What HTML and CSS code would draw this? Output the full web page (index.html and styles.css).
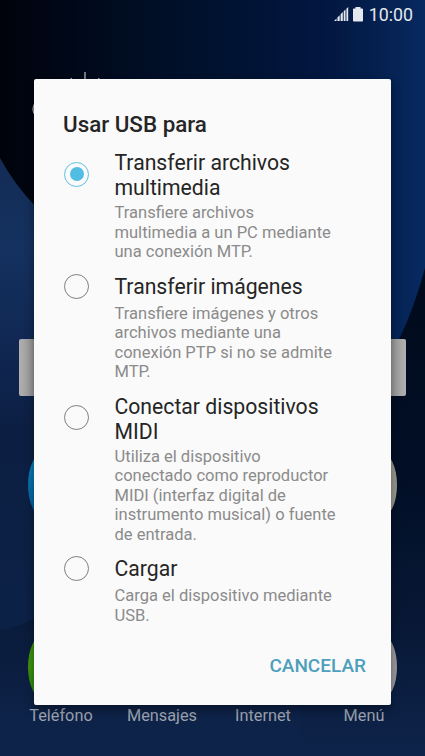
FILE: index.html
```html
<!DOCTYPE html>
<html lang="es">
  <head>
    <meta charset="UTF-8" />
    <meta name="viewport" content="width=device-width, initial-scale=1.0" />
    <title>Usar USB para</title>
    <link rel="stylesheet" href="styles.css">
  </head>
  <body>
    <div class="phone">
      <!-- WALLPAPER -->
      <svg class="wallpaper" viewBox="0 0 425 756" preserveAspectRatio="none">
        <defs>
          <linearGradient id="sky" x1="0" y1="0" x2="1" y2="0">
            <stop offset="0" stop-color="#00030a" />
            <stop offset="0.1" stop-color="#000613" />
            <stop offset="0.45" stop-color="#00112c" />
            <stop offset="0.75" stop-color="#02163f" />
            <stop offset="0.93" stop-color="#052354" />
            <stop offset="1" stop-color="#072a62" />
          </linearGradient>
          <linearGradient id="wave" x1="0" y1="158" x2="0" y2="756" gradientUnits="userSpaceOnUse">
            <stop offset="0" stop-color="#132c55" />
            <stop offset="0.15" stop-color="#14315f" />
            <stop offset="0.32" stop-color="#102752" />
            <stop offset="0.45" stop-color="#0c1f43" />
            <stop offset="0.76" stop-color="#0c2146" />
            <stop offset="1" stop-color="#0e2349" />
          </linearGradient>
          <linearGradient id="shade" x1="0" y1="268" x2="0" y2="756" gradientUnits="userSpaceOnUse">
            <stop offset="0" stop-color="#000a1b" />
            <stop offset="0.45" stop-color="#020f27" />
            <stop offset="0.75" stop-color="#081937" />
            <stop offset="0.9" stop-color="#0c2044" />
            <stop offset="1" stop-color="#0e2349" />
          </linearGradient>
          <linearGradient id="fold" x1="0" y1="617" x2="0" y2="720" gradientUnits="userSpaceOnUse">
            <stop offset="0" stop-color="#0a1b3a" />
            <stop offset="1" stop-color="#0a1b3a" stop-opacity="0" />
          </linearGradient>
        </defs>
        <rect width="425" height="756" fill="url(#sky)" />
        <path d="M0 158Q14 184 36 207Q90 262 200 300H300V756H0Z" fill="url(#wave)" />
        <path d="M0 630Q20 627 36 617H300V756H0Z" fill="url(#fold)" />
        <path d="M425 268Q412 315 396 345L300 440V756H425Z" fill="url(#shade)" />
      </svg>

      <header class="status-bar">
        <svg class="signal" viewBox="0 0 15 15">
          <path d="M0 14L2.5 11.5V14ZM3.4 10.5L5.7 8.2V14H3.4ZM6.6 7.3L8.8 5.1V14H6.6ZM9.7 4.2L11.5 2.4V14H9.7ZM12.4 1.7L14.2 0V14H12.4Z" />
        </svg>
        <svg class="battery" viewBox="0 0 10 15">
          <path d="M2.5 0H7.5V1.5H9.2Q10 1.5 10 2.3V13.7Q10 14.5 9.2 14.5H.8Q0 14.5 0 13.7V2.3Q0 1.5 .8 1.5H2.5Z" />
        </svg>
        <span>10:00</span>
      </header>

      <!-- HOME SCREEN -->
      <main class="home">
        <svg class="weather" viewBox="0 0 80 70">
          <path d="M53 0V10M39 6L42 12M67 6L64 12" />
          <path d="M10 28A9 9 0 0 0 10 46H60A12 12 0 0 0 60 22" />
          <circle cx="53" cy="26" r="12" />
        </svg>
        <div class="search"></div>
        <div class="apps">
          <i class="app blue"></i>
          <i class="app sand"></i>
        </div>
        <div class="dock">
          <div><i class="app green"></i>Teléfono</div>
          <div>Mensajes</div>
          <div>Internet</div>
          <div><i class="app gray"></i>Menú</div>
        </div>
      </main>

      <!-- USB DIALOG -->
      <section class="dialog">
        <h1>Usar USB para</h1>
        <div class="options">
          <div class="option">
            <span class="radio checked"></span>
            <h2>Transferir archivos<br>multimedia</h2>
            <p>Transfiere archivos<br>multimedia a un PC mediante<br>una conexión MTP.</p>
          </div>
          <div class="option">
            <span class="radio"></span>
            <h2>Transferir imágenes</h2>
            <p>Transfiere imágenes y otros<br>archivos mediante una<br>conexión PTP si no se admite<br>MTP.</p>
          </div>
          <div class="option">
            <span class="radio"></span>
            <h2>Conectar dispositivos<br>MIDI</h2>
            <p>Utiliza el dispositivo<br>conectado como reproductor<br>MIDI (interfaz digital de<br>instrumento musical) o fuente<br>de entrada.</p>
          </div>
          <div class="option">
            <span class="radio"></span>
            <h2>Cargar</h2>
            <p>Carga el dispositivo mediante<br>USB.</p>
          </div>
        </div>
        <button class="cancel">CANCELAR</button>
      </section>
    </div>
  </body>
</html>
```
FILE: styles.css
```css
* {
  margin: 0;
  padding: 0;
  box-sizing: border-box;
  font-family: Roboto, sans-serif;
}
.phone {
  position: relative;
  width: 425px;
  height: 756px;
  overflow: hidden;
  background: #00112c;
}
.wallpaper {
  position: absolute;
  top: 0;
  left: 0;
  width: 100%;
  height: 100%;
}

/* STATUS BAR */
.status-bar {
  position: relative;
  height: 29px;
  padding-right: 12px;
  display: flex;
  align-items: center;
  justify-content: flex-end;
  color: #e4e8ef;
  font-size: 17.8px;
}
.status-bar svg {
  fill: #e4e8ef;
}
.signal {
  width: 15px;
  height: 15px;
  margin-right: 4px;
}
.battery {
  width: 10px;
  height: 15px;
  margin-right: 6px;
}

/* HOME SCREEN */
.home {
  position: relative;
  height: 727px;
  padding-top: 43px;
  display: flex;
  flex-direction: column;
}
.weather {
  width: 80px;
  height: 70px;
  margin-left: 32px;
  fill: none;
  stroke: #a5a8ad;
  stroke-width: 1.4;
}
.search {
  height: 57px;
  margin: 197px 19px 0;
  border-radius: 2px;
  background: linear-gradient(90deg, #b0b0b0, #929292 16px, #929292 370px, #b0b0b0);
}
.apps {
  display: flex;
  justify-content: space-between;
  padding: 56px 28px 0;
}
.app {
  display: block;
  width: 66px;
  height: 66px;
  border-radius: 16px / 33px;
}
.blue {
  background: linear-gradient(#0a84c0, #045a98);
}
.sand {
  background: #98988e;
}
.green {
  background: linear-gradient(#3f9210 50%, #27860c);
}
.gray {
  background: #9a9a9f;
}
.dock {
  display: grid;
  grid-template-columns: repeat(4, 101px);
  margin-top: 116px;
  padding-left: 10.5px;
  color: #9da3af;
  font-size: 16.3px;
  line-height: 19px;
}
.dock div {
  display: flex;
  flex-direction: column;
  align-items: center;
  justify-content: flex-end;
  height: 91px;
}
.dock .app {
  margin-bottom: 6px;
}

/* USB DIALOG */
.dialog {
  position: absolute;
  top: 79px;
  left: 34px;
  width: 357px;
  height: 626px;
  padding: 32px 25px 0 29px;
  display: flex;
  flex-direction: column;
  border-radius: 2px;
  background: #fafafa;
  box-shadow: 0 4px 10px rgba(0, 0, 0, 0.4);
}
.dialog h1 {
  color: #252525;
  font-size: 22.4px;
  font-weight: 500;
  line-height: 26px;
}
.options {
  display: flex;
  flex-direction: column;
  gap: 12px;
  margin-top: 13px;
}
.option {
  display: grid;
  grid-template-columns: 51.5px 1fr;
  row-gap: 3px;
}
.option h2 {
  color: #252525;
  font-size: 21.2px;
  font-weight: 400;
  line-height: 25px;
}
.option p {
  grid-column: 2;
  color: #8b8b8b;
  font-size: 16.55px;
  line-height: 19.5px;
}
.radio {
  display: flex;
  align-items: center;
  justify-content: center;
  align-self: center;
  width: 25px;
  height: 25px;
  margin: 0 0 2px 1px;
  border: 1.5px solid #7e7e7e;
  border-radius: 50%;
}
.radio.checked {
  border-color: #62bfe0;
}
.radio.checked::after {
  content: "";
  width: 14px;
  height: 14px;
  border-radius: 50%;
  background: #51bde3;
}
.cancel {
  align-self: flex-end;
  margin-top: 30px;
  border: none;
  background: none;
  color: #4d9fbd;
  font-size: 19px;
  font-weight: 500;
  line-height: 22px;
}
```
